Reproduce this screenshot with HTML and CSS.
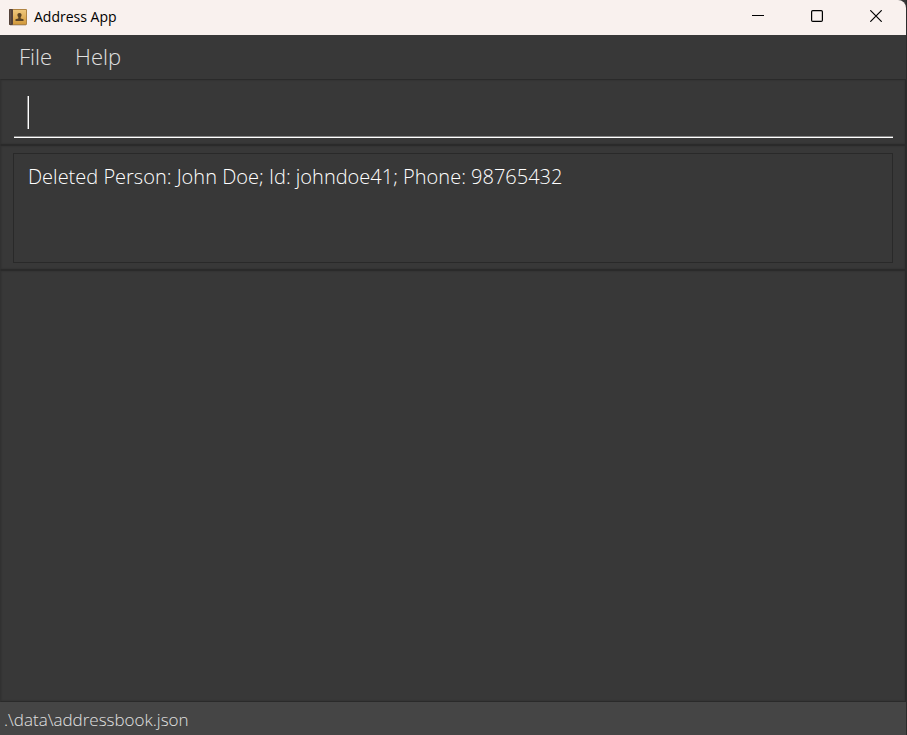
FILE: index.html
```html
<!DOCTYPE html>
<html lang="en">
<head>
<meta charset="utf-8">
<title>Address App</title>
<link rel="stylesheet" href="styles.css">
</head>
<body>
<div class="window">
  <header class="titlebar">
    <svg class="app-icon" width="18" height="17" viewBox="0 0 18 17" aria-hidden="true">
      <defs>
        <linearGradient id="cover" x1="0" y1="0" x2="0" y2="1">
          <stop offset="0" stop-color="#efc77c"/>
          <stop offset="1" stop-color="#d39a3c"/>
        </linearGradient>
      </defs>
      <rect x="0" y="0" width="18" height="16" rx="1" fill="#b08443"/>
      <rect x="4" y="1" width="13" height="14" fill="url(#cover)"/>
      <rect x="0" y="0" width="4" height="16" rx="1" fill="#54423a"/>
      <rect x="1" y="1" width="1" height="14" fill="#65544b"/>
      <path d="M10.500 4c1.300 0 2.100.9 2.100 2.100 0 .9-.4 1.600-.9 2v1.400l2.800.8v1.700h-8v-1.700l2.800-.8V8.100c-.5-.4-.9-1.100-.9-2 0-1.200.8-2.100 2.100-2.100z" fill="#5b4324"/>
      <rect x="1" y="16" width="16" height="1" fill="#d8cbc4"/>
    </svg>
    <h1 class="title">Address App</h1>
    <div class="window-controls">
      <button class="window-button" type="button" aria-label="Minimize">
        <svg width="12" height="12" viewBox="0 0 12 12"><path d="M0 5.500h12" stroke="#000" fill="none"/></svg>
      </button>
      <button class="window-button" type="button" aria-label="Maximize">
        <svg width="12" height="12" viewBox="0 0 12 12"><rect x=".6" y=".6" width="10.800" height="10.800" rx="1.200" stroke="#000" stroke-width="1.200" fill="none"/></svg>
      </button>
      <button class="window-button" type="button" aria-label="Close">
        <svg width="12" height="12" viewBox="0 0 12 12"><path d="M.3.3l11.400 11.400M11.700.3L.3 11.700" stroke="#000" stroke-width="1.200" fill="none"/></svg>
      </button>
    </div>
  </header>
  <nav class="menubar">
    <button class="menu" type="button">File</button>
    <button class="menu" type="button">Help</button>
  </nav>
  <main class="content">
    <section class="pane command-pane">
      <div class="command-field">
        <span class="caret"></span>
        <input class="command-input" type="text" aria-label="Command">
      </div>
    </section>
    <section class="pane result-pane">
      <output class="result">Deleted Person: John Doe; Id: johndoe41; Phone: 98765432</output>
    </section>
    <section class="pane list-pane"></section>
  </main>
  <footer class="statusbar">.\data\addressbook.json</footer>
</div>
</body>
</html>
```
FILE: styles.css
```css
* {
  box-sizing: border-box;
}

body {
  margin: 0;
  background: #2b2b2b;
  font-family: "Open Sans", "Noto Sans", sans-serif;
  font-weight: 300;
}

.window {
  display: flex;
  flex-direction: column;
  min-height: 100vh;
  border-right: 1px solid #2b2b2b;
  background: #383838;
}

.titlebar {
  display: flex;
  align-items: center;
  height: 35px;
  padding-left: 9px;
  background: #f9f1ee;
  border-top-right-radius: 8px;
  color: #000;
}

.app-icon {
  margin-right: 7px;
}

.title {
  margin: 0;
  padding-bottom: 2px;
  font-family: "Open Sans", sans-serif;
  font-size: 14px;
  font-weight: 400;
}

.window-controls {
  display: flex;
  margin-left: auto;
  height: 100%;
}

.window-button {
  display: flex;
  align-items: center;
  justify-content: center;
  width: 59px;
  padding: 0 1px 3px 0;
  border: 0;
  background: none;
}

.menubar {
  display: flex;
  gap: 23px;
  height: 44px;
  padding: 0 19px;
}

.menu {
  padding: 0 0 2px;
  border: 0;
  background: none;
  color: #e0e0e0;
  font: inherit;
  font-size: 22px;
}

.content {
  display: flex;
  flex: 1;
  flex-direction: column;
}

.pane {
  border: 1px solid #2a2a2a;
  border-left-color: #313131;
  box-shadow: inset 0 0 2px #2c2c2c;
}

.command-pane {
  padding: 6px 12px 6px 13px;
}

.command-field {
  display: flex;
  align-items: flex-start;
  height: 52px;
  padding: 10px 13px 0;
  border-bottom: 1px solid #fff;
  box-shadow: inset 0 -1px #858585;
}

.caret {
  width: 2px;
  height: 33px;
  background: linear-gradient(to right, #8c8c8c 50%, #fff 50%);
}

.command-input {
  flex: 1;
  min-width: 0;
  padding: 0;
  border: 0;
  outline: 0;
  background: none;
  color: #fff;
  font: inherit;
  font-size: 20px;
}

.result-pane {
  padding: 7px 12px 6px;
}

.result {
  display: block;
  min-height: 110px;
  padding: 9px 14px;
  border: 1px solid #292929;
  color: #fff;
  font-size: 20px;
  line-height: 28px;
}

.list-pane {
  flex: 1;
}

.statusbar {
  height: 33px;
  padding: 3px 4px 0;
  background: #454545;
  color: #e0e0e0;
  font-size: 17px;
  line-height: 30px;
}
```
